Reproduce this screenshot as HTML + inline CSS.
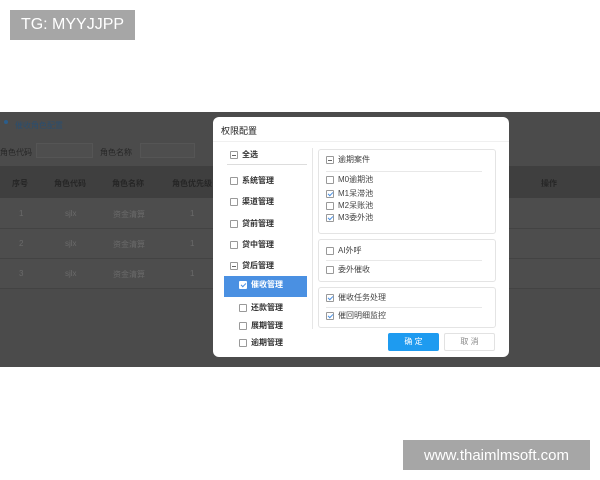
<!DOCTYPE html>
<html><head><meta charset="utf-8"><style>
*{margin:0;padding:0;box-sizing:border-box}
body{width:600px;height:480px;background:#fff;position:relative;overflow:hidden;font-family:"Liberation Sans","Noto Sans CJK SC",sans-serif}
.a{position:absolute}
.lbl{background:#a6a6a6;color:#fff;font-size:16px;display:flex;align-items:center;justify-content:center}
.ov{left:0;top:112px;width:600px;height:255px;background:#4b4b4b}
.t{font-size:8px;color:#333;white-space:nowrap}
.dk{color:#262626}
.lt{color:#6a6a6a}
.cb{width:8px;height:8px;border:1px solid #999;border-radius:1px;background:#fff;display:inline-block;vertical-align:middle;margin-right:4px;position:relative}
.it{position:absolute;font-size:8px;font-weight:bold;color:#333;white-space:nowrap;line-height:10px}
.rt{position:absolute;font-size:8px;color:#444;white-space:nowrap;line-height:10px}
.chk::after{content:"";position:absolute;left:2px;top:0px;width:2px;height:4px;border:solid #4a90e2;border-width:0 1px 1px 0;transform:rotate(45deg)}
.ind::after{content:"";position:absolute;left:1px;top:3px;width:4px;height:1px;background:#666}
.box{position:absolute;border:1px solid #e4e4e4;border-radius:3px}
.hl{background:#e8e8e8;height:1px;position:absolute}
</style></head><body>
<div class="a lbl" style="left:10px;top:10px;width:125px;height:30px">TG: MYYJJPP</div>
<div class="a lbl" style="left:403px;top:440px;width:187px;height:30px;font-size:15px">www.thaimlmsoft.com</div>

<div class="a ov"></div>
<div class="a" style="left:4px;top:120px;width:4px;height:4px;border-radius:50%;background:#2b5d8a"></div>
<div class="a t" style="left:15px;top:120px;color:#2b4e6e">催收角色配置</div>
<div class="a t dk" style="left:0;top:147px">角色代码</div>
<div class="a" style="left:36px;top:143px;width:57px;height:15px;border:1px solid #555;background:#4e4e4e"></div>
<div class="a t dk" style="left:100px;top:147px">角色名称</div>
<div class="a" style="left:140px;top:143px;width:55px;height:15px;border:1px solid #555;background:#4e4e4e"></div>
<div class="a" style="left:0;top:166px;width:600px;height:32px;background:#3f3f3f"></div>
<div class="a t dk" style="left:12px;top:178px;font-weight:bold">序号</div>
<div class="a t dk" style="left:54px;top:178px;font-weight:bold">角色代码</div>
<div class="a t dk" style="left:112px;top:178px;font-weight:bold">角色名称</div>
<div class="a t dk" style="left:172px;top:178px;font-weight:bold">角色优先级</div>
<div class="a t dk" style="left:541px;top:178px;font-weight:bold">操作</div>
<div class="a" style="left:0;top:198px;width:600px;height:90px;background:#4d4d4d"></div>
<div class="hl" style="left:0;top:228px;width:600px;background:#434343"></div>
<div class="hl" style="left:0;top:258px;width:600px;background:#434343"></div>
<div class="hl" style="left:0;top:288px;width:600px;background:#434343"></div>
<div class="a t lt" style="left:19px;top:209px">1</div><div class="a t lt" style="left:65px;top:209px">sjlx</div><div class="a t lt" style="left:113px;top:209px">资金清算</div><div class="a t lt" style="left:190px;top:209px">1</div>
<div class="a t lt" style="left:19px;top:239px">2</div><div class="a t lt" style="left:65px;top:239px">sjlx</div><div class="a t lt" style="left:113px;top:239px">资金清算</div><div class="a t lt" style="left:190px;top:239px">1</div>
<div class="a t lt" style="left:19px;top:269px">3</div><div class="a t lt" style="left:65px;top:269px">sjlx</div><div class="a t lt" style="left:113px;top:269px">资金清算</div><div class="a t lt" style="left:190px;top:269px">1</div>

<div class="a" style="left:213px;top:117px;width:296px;height:240px;background:#fff;border-radius:6px">
<div class="a" style="left:8px;top:7px;font-size:9px;color:#222">权限配置</div>
<div class="hl" style="left:0;top:24px;width:296px;background:#f0f0f0"></div>
<div class="it" style="left:17px;top:33px"><span class="cb ind"></span>全选</div>
<div class="hl" style="left:14px;top:47px;width:80px;background:#ddd"></div>
<div class="it" style="left:17px;top:59px"><span class="cb"></span>系统管理</div>
<div class="it" style="left:17px;top:80px"><span class="cb"></span>渠道管理</div>
<div class="it" style="left:17px;top:102px"><span class="cb"></span>贷前管理</div>
<div class="it" style="left:17px;top:123px"><span class="cb"></span>贷中管理</div>
<div class="it" style="left:17px;top:144px"><span class="cb ind"></span>贷后管理</div>
<div class="a" style="left:11px;top:159px;width:83px;height:21px;background:#4a90e2"></div>
<div class="it" style="left:26px;top:163px;color:#fff"><span class="cb chk" style="border-color:#fff"></span>催收管理</div>
<div class="it" style="left:26px;top:186px"><span class="cb"></span>还款管理</div>
<div class="it" style="left:26px;top:204px"><span class="cb"></span>展期管理</div>
<div class="it" style="left:26px;top:221px"><span class="cb"></span>逾期管理</div>
<div class="a" style="left:99px;top:31px;width:1px;height:181px;background:#e6e6e6"></div>

<div class="box" style="left:105px;top:32px;width:178px;height:85px"></div>
<div class="rt" style="left:113px;top:38px"><span class="cb ind"></span>逾期案件</div>
<div class="hl" style="left:113px;top:54px;width:156px"></div>
<div class="rt" style="left:113px;top:58px"><span class="cb"></span>M0逾期池</div>
<div class="rt" style="left:113px;top:72px"><span class="cb chk"></span>M1呆滞池</div>
<div class="rt" style="left:113px;top:84px"><span class="cb"></span>M2呆账池</div>
<div class="rt" style="left:113px;top:96px"><span class="cb chk"></span>M3委外池</div>
<div class="box" style="left:105px;top:122px;width:178px;height:43px"></div>
<div class="rt" style="left:113px;top:129px"><span class="cb"></span>AI外呼</div>
<div class="hl" style="left:113px;top:143px;width:156px"></div>
<div class="rt" style="left:113px;top:148px"><span class="cb"></span>委外催收</div>
<div class="box" style="left:105px;top:170px;width:178px;height:41px"></div>
<div class="rt" style="left:113px;top:176px"><span class="cb chk"></span>催收任务处理</div>
<div class="hl" style="left:113px;top:190px;width:156px"></div>
<div class="rt" style="left:113px;top:194px"><span class="cb chk"></span>催回明细监控</div>
<div class="a" style="left:175px;top:216px;width:51px;height:18px;background:#1e9bf0;border-radius:2px;color:#fff;font-size:8px;text-align:center;line-height:18px">确 定</div>
<div class="a" style="left:231px;top:216px;width:51px;height:18px;border:1px solid #e2e2e2;border-radius:2px;color:#888;font-size:8px;text-align:center;line-height:16px">取 消</div>
</div>
</body></html>
